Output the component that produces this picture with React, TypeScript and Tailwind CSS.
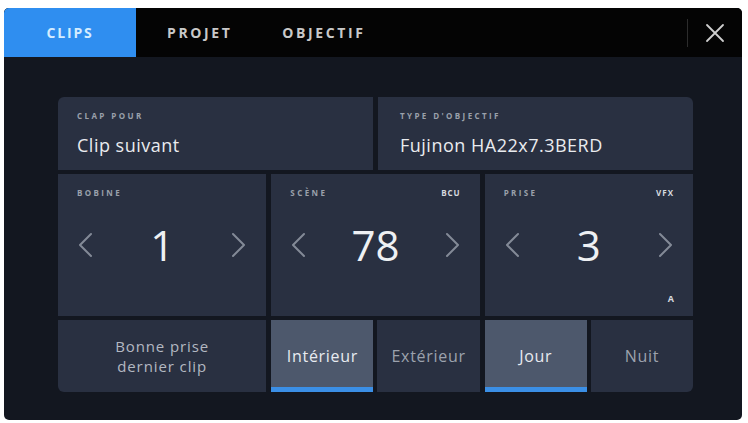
import React from 'react';

const FONT = { fontFamily: '"Open Sans", "Noto Sans", sans-serif' };

const Chevron: React.FC<{ dir: 'left' | 'right' }> = ({ dir }) => (
  <svg width="16" height="26" viewBox="0 0 16 26" fill="none" className="shrink-0">
    <path
      d={dir === 'left' ? 'M14 2 L3 13 L14 24' : 'M2 2 L13 13 L2 24'}
      stroke="#838a97"
      strokeWidth="2"
      strokeLinecap="round"
      strokeLinejoin="round"
    />
  </svg>
);

const Label: React.FC<{ children: React.ReactNode; className?: string }> = ({ children, className = '' }) => (
  <span className={`text-[8px] font-bold uppercase tracking-[2.4px] text-[#9aa0ab] ${className}`}>{children}</span>
);

const Counter: React.FC<{ label: string; value: string; tag?: string; sub?: string }> = ({ label, value, tag, sub }) => (
  <div className="bg-[#293041] flex flex-col px-[19px] pt-[13px] pb-[10px]">
    <div className="flex justify-between items-center h-[12px]">
      <Label>{label}</Label>
      {tag && <span className="text-[8px] font-bold tracking-[1px] text-[#d6d9df]">{tag}</span>}
    </div>
    <div className="flex items-center justify-between mt-[25px]">
      <Chevron dir="left" />
      <span className="text-[42px] leading-none text-[#eef0f3]">{value}</span>
      <Chevron dir="right" />
    </div>
    <div className="flex justify-end mt-auto h-[14px]">
      {sub && <span className="text-[9px] font-bold text-[#d6d9df]">{sub}</span>}
    </div>
  </div>
);

const Toggle: React.FC<{ text: string; active?: boolean }> = ({ text, active }) => (
  <div className={`relative flex items-center justify-center ${active ? 'bg-[#4d586c] text-[#e8ebf0]' : 'bg-[#293041] text-[#9ca2ad]'}`}>
    <span className="text-[16px] tracking-[0.7px]">{text}</span>
    {active && <div className="absolute left-0 right-0 bottom-0 h-[5px] bg-[#3b8fe6]" />}
  </div>
);

export default function App() {
  return (
    <div className="w-[748px] h-[423px] bg-white pt-[8px] pl-[4px]" style={FONT}>
      <div className="w-[738px] h-[412px] rounded-[5px] overflow-hidden bg-[#131720] flex flex-col">
        <div className="h-[49px] bg-[#040404] flex items-stretch shrink-0">
          <div className="w-[132px] bg-[#2f8ef0] flex items-center justify-center">
            <span className="text-[14px] font-bold tracking-[1.8px] text-[#d4ecff]">CLIPS</span>
          </div>
          <div className="flex items-center pl-[31px] gap-[50px]">
            <span className="text-[14px] font-bold tracking-[2.6px] text-[#c9c9c9]">PROJET</span>
            <span className="text-[14px] font-bold tracking-[2.6px] text-[#c9c9c9]">OBJECTIF</span>
          </div>
          <div className="flex-1" />
          <div className="flex items-center">
            <div className="w-px h-[28px] bg-[#2c2c2c]" />
            <div className="w-[54px] flex items-center justify-center">
              <svg width="20" height="20" viewBox="0 0 20 20">
                <path d="M2 2 L18 18 M18 2 L2 18" stroke="#cfcfcf" strokeWidth="1.8" strokeLinecap="round" />
              </svg>
            </div>
          </div>
        </div>

        <div className="pl-[54px] pt-[40px]">
          <div className="w-[635px] rounded-[6px] overflow-hidden flex flex-col gap-[4px]">
            <div className="grid grid-cols-2 gap-[5px] h-[73px]">
              <div className="bg-[#293041] flex flex-col px-[19px] pt-[13px]">
                <Label>Clap pour</Label>
                <span className="text-[18px] tracking-[0.5px] text-[#e9ebef] mt-[10px]">Clip suivant</span>
              </div>
              <div className="bg-[#293041] flex flex-col px-[22px] pt-[13px]">
                <Label>Type d'objectif</Label>
                <span className="text-[18px] tracking-[0.5px] text-[#e9ebef] mt-[10px]">Fujinon HA22x7.3BERD</span>
              </div>
            </div>

            <div className="grid grid-cols-3 gap-[5px] h-[142px]">
              <Counter label="Bobine" value="1" />
              <Counter label="Scène" value="78" tag="BCU" />
              <Counter label="Prise" value="3" tag="VFX" sub="A" />
            </div>

            <div className="grid grid-cols-3 gap-[5px] h-[72px]">
              <div className="bg-[#293041] flex flex-col items-center justify-center text-center text-[15px] tracking-[0.9px] leading-[20px] text-[#b3b8c1]">
                <span>Bonne prise</span>
                <span>dernier clip</span>
              </div>
              <div className="grid grid-cols-2 gap-[4px]">
                <Toggle text="Intérieur" active />
                <Toggle text="Extérieur" />
              </div>
              <div className="grid grid-cols-2 gap-[4px]">
                <Toggle text="Jour" active />
                <Toggle text="Nuit" />
              </div>
            </div>
          </div>
        </div>
      </div>
    </div>
  );
}
